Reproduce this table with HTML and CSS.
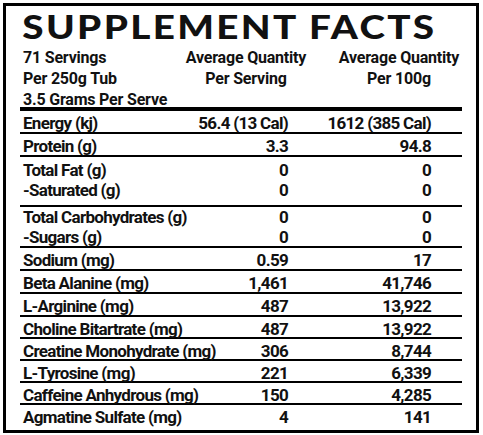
FILE: index.html
```html
<!DOCTYPE html>
<html lang="en">
  <head>
    <meta charset="UTF-8" />
    <meta name="viewport" content="width=device-width, initial-scale=1.0" />
    <title>Supplement Facts</title>
    <link rel="stylesheet" href="styles.css">
  </head>
  <body>
    <div class="label">
      <h1 class="title">SUPPLEMENT FACTS</h1>
      <div class="head">
        <div class="serv">71 Servings<br />Per 250g Tub<br />3.5 Grams Per Serve</div>
        <div class="avg">Average Quantity<br />Per Serving</div>
        <div class="avg avg-100">Average Quantity<br />Per 100g</div>
      </div>
      <div class="rows">
        <div class="row"><span>Energy (kj)</span><span>56.4 (13 Cal)</span><span>1612 (385 Cal)</span></div>
        <div class="row"><span>Protein (g)</span><span>3.3</span><span>94.8</span></div>
        <div class="row fat"><span>Total Fat (g)<br />-Saturated (g)</span><span>0<br />0</span><span>0<br />0</span></div>
        <div class="row carb"><span>Total Carbohydrates (g)<br />-Sugars (g)</span><span>0<br />0</span><span>0<br />0</span></div>
        <div class="row"><span>Sodium (mg)</span><span>0.59</span><span>17</span></div>
        <div class="row"><span>Beta Alanine (mg)</span><span>1,461</span><span>41,746</span></div>
        <div class="row"><span>L-Arginine (mg)</span><span>487</span><span>13,922</span></div>
        <div class="row"><span>Choline Bitartrate (mg)</span><span>487</span><span>13,922</span></div>
        <div class="row"><span>Creatine Monohydrate (mg)</span><span>306</span><span>8,744</span></div>
        <div class="row"><span>L-Tyrosine (mg)</span><span>221</span><span>6,339</span></div>
        <div class="row"><span>Caffeine Anhydrous (mg)</span><span>150</span><span>4,285</span></div>
        <div class="row"><span>Agmatine Sulfate (mg)</span><span>4</span><span>141</span></div>
      </div>
    </div>
  </body>
</html>
```

FILE: styles.css
```css
* {
  margin: 0;
  padding: 0;
  box-sizing: border-box;
}
body {
  background-color: white;
  color: #111;
  font-family: Roboto, "Liberation Sans", sans-serif;
}
.label {
  margin: 3px;
  width: 476px;
  height: 430px;
  border: 3px solid black;
  padding: 0 14px;
  overflow: hidden;
}
.title {
  font-family: Lato, "Liberation Sans", sans-serif;
  font-weight: 900;
  font-size: 33px;
  line-height: 33px;
  letter-spacing: 2px;
  padding: 4px 0 0 2px;
  white-space: nowrap;
  transform: scaleX(1.17);
  transform-origin: left;
}
.head {
  display: grid;
  grid-template-columns: 156px 140px 1fr;
  font-size: 16px;
  font-weight: 700;
  letter-spacing: -0.2px;
  line-height: 21px;
  padding-top: 4px;
  height: 68px;
  border-bottom: 4px solid black;
  white-space: nowrap;
}
.serv {
  padding-left: 3px;
}
.avg {
  text-align: center;
}
.avg-100 {
  padding-left: 20px;
}
.row {
  display: grid;
  grid-template-columns: minmax(0, 1fr) 120px 143px;
  padding: 4px 31px 0 3px;
  height: 23px;
  font-size: 17px;
  font-weight: 700;
  letter-spacing: -0.7px;
  line-height: 17px;
  border-bottom: 2px solid black;
  white-space: nowrap;
}
.row:nth-child(n+8) {
  height: 22px;
}
.row span + span {
  text-align: right;
}
.row:last-child {
  border-bottom: none;
}
.fat {
  height: 50px;
  line-height: 20px;
  padding-top: 3px;
}
.carb {
  height: 41px;
  line-height: 20px;
  padding-top: 0;
}
```
